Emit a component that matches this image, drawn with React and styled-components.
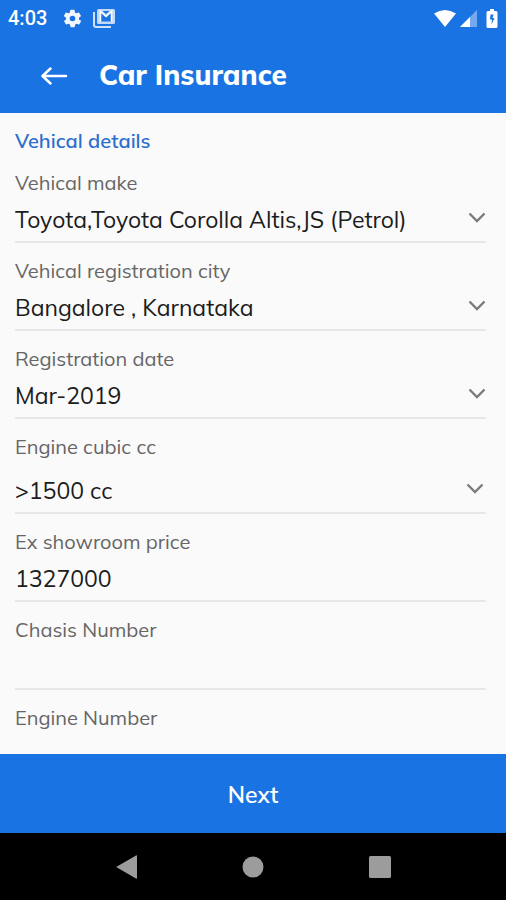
import React from "react";
import styled, { createGlobalStyle, css } from "styled-components";

const blue = "#1a73e2";

const GlobalStyle = createGlobalStyle`
  *, *::before, *::after { box-sizing: border-box; }
  body {
    margin: 0;
    background: #fafafa;
    font-family: Mulish, Muli, "Open Sans", sans-serif;
  }
`;

const Screen = styled.div`
  display: flex;
  flex-direction: column;
  height: 100vh;
  background: #fafafa;
`;

const StatusBar = styled.div`
  display: flex;
  align-items: center;
  flex: none;
  height: 36px;
  padding: 0 6px 0 8px;
  background: ${blue};
  color: #fff;
`;

const Clock = styled.time`
  margin-right: 15px;
  font: 500 20px/24px Roboto, sans-serif;
`;

const StatusIcons = styled.div`
  display: flex;
  align-items: center;
  gap: ${(p) => p.$gap}px;
  margin-left: ${(p) => (p.$end ? "auto" : 0)};
`;

const AppBar = styled.header`
  display: flex;
  align-items: center;
  flex: none;
  gap: 23px;
  height: 77px;
  padding: 0 32px;
  background: ${blue};
  color: #fff;
`;

const BackButton = styled.button`
  display: flex;
  padding: 8px;
  border: 0;
  background: none;
  color: inherit;
`;

const Title = styled.h1`
  margin: 0;
  font-size: 28px;
  line-height: 32px;
  font-weight: 800;
`;

const Form = styled.form`
  flex: 1;
  min-height: 0;
  padding: 16px 20px 16px 15px;
  overflow-y: auto;
  scrollbar-width: none;
`;

const SectionTitle = styled.h2`
  margin: 0 0 18px;
  color: #2b6fce;
  font-size: 20px;
  line-height: 24px;
  font-weight: 600;
`;

const Field = styled.div`
  margin-bottom: 16px;
`;

const Label = styled.label`
  display: block;
  color: #666;
  font-size: 20px;
  line-height: 24px;
`;

const Control = styled.div`
  display: grid;
  align-items: center;
  height: ${(p) => (p.$tall ? 55 : 48)}px;
  padding-top: ${(p) => (p.$tall ? 7 : 0)}px;
  padding-right: ${(p) => (p.$tall ? 2 : 0)}px;
  border-bottom: 2px solid #e8e8e8;

  & > * {
    grid-area: 1 / 1;
  }
`;

const valueText = css`
  width: 100%;
  height: 40px;
  margin: 0;
  padding: 3px 0 0;
  border: 0;
  outline-offset: 2px;
  appearance: none;
  background: none;
  color: #1c1c1c;
  font-family: inherit;
  font-size: 23px;
  line-height: 32px;
`;

const Select = styled.select`
  ${valueText}
`;

const Input = styled.input`
  ${valueText}
`;

const Chevron = styled.svg`
  justify-self: end;
  pointer-events: none;
`;

const NextButton = styled.button`
  flex: none;
  height: 79px;
  padding: 2px 0 0;
  border: 0;
  background: ${blue};
  color: #fff;
  font-family: inherit;
  font-size: 23px;
  line-height: 32px;
  font-weight: 600;
`;

const SystemNav = styled.nav`
  display: grid;
  grid-template-columns: repeat(3, 1fr);
  flex: none;
  height: 67px;
  padding: 0 12.5%;
  background: #000;
`;

const NavButton = styled.button`
  display: grid;
  place-items: center;
  padding: 0;
  border: 0;
  background: none;
  color: #9c9c9c;
`;

const fields = [
  { id: "make", label: "Vehical make", value: "Toyota,Toyota Corolla Altis,JS (Petrol)", select: true },
  { id: "city", label: "Vehical registration city", value: "Bangalore , Karnataka", select: true },
  { id: "date", label: "Registration date", value: "Mar-2019", select: true },
  { id: "cubic", label: "Engine cubic cc", value: ">1500 cc", select: true, tall: true },
  { id: "price", label: "Ex showroom price", value: "1327000" },
  { id: "chasis", label: "Chasis Number", value: "" },
  { id: "engine", label: "Engine Number", value: "" },
];

function FormField({ id, label, value, select, tall }) {
  return (
    <Field>
      <Label htmlFor={id}>{label}</Label>
      <Control $tall={tall}>
        {select ? (
          <>
            <Select id={id} defaultValue={value}>
              <option>{value}</option>
            </Select>
            <Chevron width="18" height="12" viewBox="0 0 18 12" fill="none" stroke="#7b7b7b" strokeWidth="2.4" aria-hidden="true">
              <path d="M1.5 1.5 9 9l7.5-7.5" />
            </Chevron>
          </>
        ) : (
          <Input id={id} type="text" defaultValue={value} />
        )}
      </Control>
    </Field>
  );
}

export default function App() {
  return (
    <>
      <GlobalStyle />
      <Screen>
        <StatusBar>
          <Clock>4:03</Clock>
          <StatusIcons $gap={10}>
            <svg width="21" height="21" viewBox="0 0 24 24" fill="#f2f7ff" aria-hidden="true">
              <path d="M19.4 13a7.5 7.5 0 0 0 0-2l2.1-1.6a.5.5 0 0 0 .1-.6l-2-3.5a.5.5 0 0 0-.6-.2l-2.5 1a7.3 7.3 0 0 0-1.7-1l-.4-2.6a.5.5 0 0 0-.5-.5h-4a.5.5 0 0 0-.5.5l-.4 2.6a7.7 7.7 0 0 0-1.7 1l-2.5-1a.5.5 0 0 0-.6.2l-2 3.5a.5.5 0 0 0 .1.6L4.6 11a7.5 7.5 0 0 0 0 2l-2.1 1.6a.5.5 0 0 0-.1.6l2 3.5c.1.2.4.3.6.2l2.5-1c.5.4 1.1.7 1.7 1l.4 2.6c0 .3.2.5.5.5h4c.3 0 .5-.2.5-.5l.4-2.6a7.3 7.3 0 0 0 1.7-1l2.5 1c.2.1.5 0 .6-.2l2-3.5a.5.5 0 0 0-.1-.6zM12 15.2a3.2 3.2 0 1 1 0-6.4 3.2 3.2 0 0 1 0 6.4z" />
            </svg>
            <svg width="22" height="20" viewBox="0 0 22 20" fill="none" aria-hidden="true">
              <path d="M1 4v13q0 2 2 2h15" stroke="#cfe1fa" strokeWidth="2" />
              <rect x="4" y="1" width="18" height="15" rx="1.5" fill="#c3d9f8" />
              <path d="M8 13.5V4.5l5 4.500 5-4.500v9z" fill={blue} />
              <path d="M7.5 13.5V3.5L13 8.5l5.5-5v10" stroke="#fff" strokeWidth="1.5" />
              <path d="M9.5 3h7L13 6z" fill={blue} />
            </svg>
          </StatusIcons>
          <StatusIcons $gap={4} $end>
            <svg width="22" height="17" viewBox="0 0 22 17" fill="#fff" aria-hidden="true">
              <path d="M0 3.5Q11-3.5 22 3.5L11 17z" />
            </svg>
            <svg width="17" height="17" viewBox="0 0 17 17" aria-hidden="true">
              <path d="M0 17 17 0v17z" fill="#75a9ee" />
              <path d="M0 17 10 7v10z" fill="#fff" />
            </svg>
            <svg width="19" height="19" viewBox="4 0 19 19" aria-hidden="true">
              <path d="M11 2h2V0h4v2h2q1.500 0 1.500 1.500v14q0 1.500-1.500 1.500h-8q-1.500 0-1.500-1.500v-14Q9.500 2 11 2z" fill="#fff" />
              <path d="M16.500 5.500h-3l-.5 5h2l-.5 5 3-6.500h-2z" fill={blue} />
            </svg>
          </StatusIcons>
        </StatusBar>

        <AppBar>
          <BackButton type="button" aria-label="Back">
            <svg width="28" height="20" viewBox="0 0 28 20" fill="none" stroke="currentColor" strokeWidth="2.5" strokeLinecap="round" strokeLinejoin="round" aria-hidden="true">
              <path d="M26 11H3M10.500 3.500 2.500 11l8 7.500" />
            </svg>
          </BackButton>
          <Title>Car Insurance</Title>
        </AppBar>

        <Form id="vehicle-form" onSubmit={(e) => e.preventDefault()}>
          <SectionTitle>Vehical details</SectionTitle>
          {fields.map((f) => (
            <FormField key={f.id} {...f} />
          ))}
        </Form>

        <NextButton type="submit" form="vehicle-form">Next</NextButton>

        <SystemNav>
          <NavButton type="button" aria-label="System back">
            <svg width="22" height="24" viewBox="0 0 22 24" fill="currentColor" aria-hidden="true">
              <path d="M20 .5q1-.5 1 .5v22q0 1-1 .5L1 12.500q-1-.5 0-1z" />
            </svg>
          </NavButton>
          <NavButton type="button" aria-label="Home">
            <svg width="22" height="22" viewBox="0 0 22 22" fill="currentColor" aria-hidden="true">
              <circle cx="11" cy="11" r="10.5" />
            </svg>
          </NavButton>
          <NavButton type="button" aria-label="Recent apps">
            <svg width="22" height="22" viewBox="0 0 22 22" fill="currentColor" aria-hidden="true">
              <rect width="22" height="22" rx="1.5" />
            </svg>
          </NavButton>
        </SystemNav>
      </Screen>
    </>
  );
}
